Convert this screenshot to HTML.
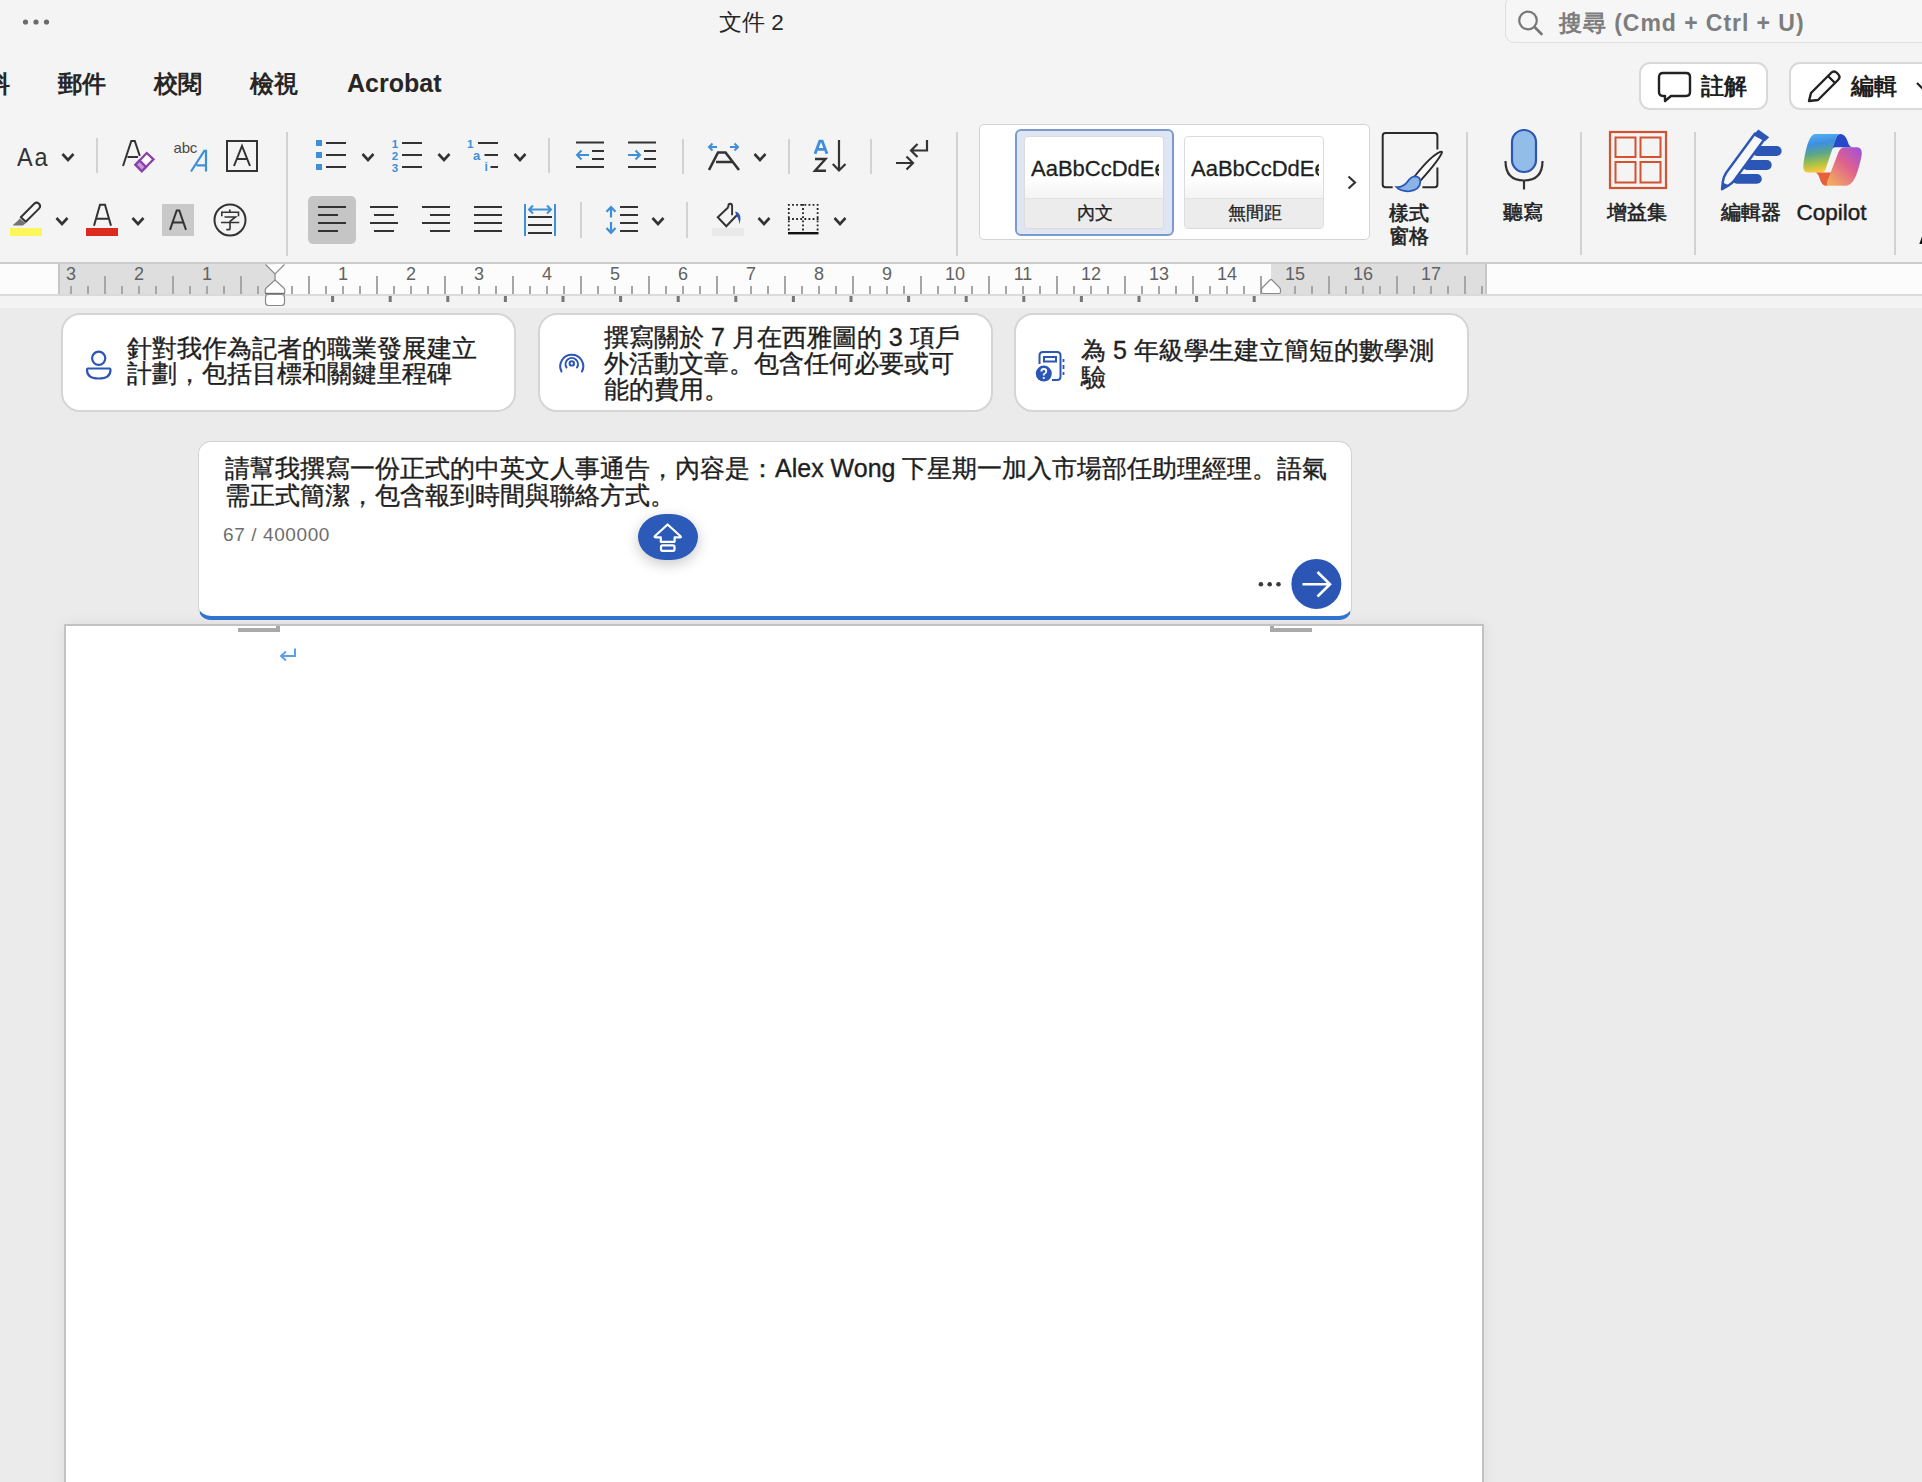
<!DOCTYPE html>
<html><head><meta charset="utf-8">
<style>
*{box-sizing:border-box;margin:0;padding:0}
html,body{width:1922px;height:1482px;overflow:hidden;background:#ebebeb;font-family:"Liberation Sans",sans-serif;color:#1f1f1f}
.a{position:absolute}
.t{position:absolute;white-space:nowrap;line-height:1}
.s{-webkit-text-stroke:0.35px #1f1f1f}
svg{position:absolute;overflow:visible}
</style></head><body>
<!-- TOOLBAR -->
<div class="a" style="left:0;top:0;width:1922px;height:262px;background:#f4f4f4"></div>
<div class="a" style="left:0;top:262px;width:1922px;height:2px;background:#cdcdcd"></div>

<!-- title row -->
<svg width="1922" height="262" style="left:0;top:0">
 <g fill="#6b6b6b"><circle cx="25.5" cy="22" r="2.6"/><circle cx="36" cy="22" r="2.6"/><circle cx="46.5" cy="22" r="2.6"/></g>
</svg>
<div class="t" style="left:719px;top:12px;font-size:22.5px;color:#262626">文件 2</div>
<!-- search -->
<div class="a" style="left:1505px;top:-4px;width:440px;height:47px;border:1.5px solid #dedede;border-radius:9px;background:#f6f6f6"></div>
<svg width="40" height="40" style="left:1510px;top:2px"><circle cx="18" cy="18.5" r="8.8" fill="none" stroke="#777" stroke-width="2.2"/><path d="M24.5 25 L31.5 32" stroke="#777" stroke-width="2.6" stroke-linecap="round"/></svg>
<div class="t" style="left:1559px;top:12px;font-size:23px;color:#7d7d7d;font-weight:bold;letter-spacing:0.95px">搜尋 (Cmd + Ctrl + U)</div>
<!-- tabs -->
<div class="t" style="left:-14px;top:71.5px;font-size:24px;font-weight:bold;color:#262626">料</div>
<div class="t" style="left:57.5px;top:71.5px;font-size:24px;font-weight:bold;color:#262626">郵件</div>
<div class="t" style="left:153.5px;top:71.5px;font-size:24px;font-weight:bold;color:#262626">校閱</div>
<div class="t" style="left:249.5px;top:71.5px;font-size:24px;font-weight:bold;color:#262626">檢視</div>
<div class="t" style="left:347px;top:71px;font-size:25px;font-weight:bold;color:#262626">Acrobat</div>
<!-- comment / edit buttons -->
<div class="a" style="left:1639px;top:62px;width:129px;height:48px;border:2px solid #d9d9d9;border-radius:11px;background:#fff"></div>
<svg width="40" height="40" style="left:1655px;top:68px"><path d="M8 5 H31 Q35 5 35 9 V24 Q35 28 31 28 H16 L10 33 V28 H8 Q4 28 4 24 V9 Q4 5 8 5 Z" fill="none" stroke="#222" stroke-width="2.4" stroke-linejoin="round"/></svg>
<div class="t" style="left:1701px;top:75px;font-size:23px;font-weight:bold;color:#1f1f1f">註解</div>
<div class="a" style="left:1789px;top:62px;width:160px;height:48px;border:2px solid #d9d9d9;border-radius:11px;background:#fff"></div>
<svg width="40" height="40" style="left:1805px;top:68px"><path d="M4 33 L6 25 L26 5 Q29 2 32 5 L33 6 Q36 9 33 12 L13 32 Z M23 8 L30 15" fill="none" stroke="#222" stroke-width="2.4" stroke-linejoin="round"/></svg>
<div class="t" style="left:1851px;top:75px;font-size:23px;font-weight:bold;color:#1f1f1f">編輯</div>
<svg width="20" height="20" style="left:1910px;top:78px"><path d="M7 5 L13 11 L19 5" fill="none" stroke="#222" stroke-width="2.2"/></svg>


<!-- RIBBON ICONS -->
<svg width="1922" height="262" style="left:0;top:0" fill="none" stroke-linecap="butt">
 <!-- separators -->
 <g stroke="#d2d2d2" stroke-width="2">
  <path d="M97 138 V173"/><path d="M549 138 V173"/><path d="M683 139 V174"/><path d="M789 139 V174"/><path d="M871 139 V174"/>
  <path d="M287 132 V256"/><path d="M957 132 V256"/>
  <path d="M581 202 V238"/><path d="M687 202 V238"/>
  <path d="M1467 132 V255"/><path d="M1581 132 V255"/><path d="M1695 132 V255"/><path d="M1895 132 V255"/>
 </g>
 <!-- chevrons -->
 <g stroke="#333" stroke-width="2.6" stroke-linejoin="miter">
  <path d="M62.5 154 L68 160 L73.5 154"/>
  <path d="M362.5 154 L368 160 L373.5 154"/>
  <path d="M438.5 154 L444 160 L449.5 154"/>
  <path d="M514.5 154 L520 160 L525.5 154"/>
  <path d="M754.5 154 L760 160 L765.5 154"/>
  <path d="M56.5 218 L62 224 L67.5 218"/>
  <path d="M132.5 218 L138 224 L143.5 218"/>
  <path d="M652.5 218 L658 224 L663.5 218"/>
  <path d="M758.5 218 L764 224 L769.5 218"/>
  <path d="M834.5 218 L840 224 L845.5 218"/>
 </g>
 <!-- Eraser A -->
 <path d="M123 166 L131.3 141 H134.8 L139.8 156 M127.5 157 H138" stroke="#333" stroke-width="2"/>
 <path d="M135.5 164.8 L146.7 153 L153.5 159.3 L141.8 171.2 Z" stroke="#8b3fae" stroke-width="2.3" fill="#fff"/>
 <path d="M135.5 164.8 L139.6 160.5 L146 166.9 L141.8 171.2 Z" fill="#c49bd6" stroke="#8b3fae" stroke-width="2.3"/>
 <!-- abc A -->
 <path d="M191 171.5 L204.3 150.8 H206 V171.5 M196.5 165.3 H206" stroke="#3f8fd8" stroke-width="2.2"/>
 <!-- box A -->
 <rect x="227" y="141" width="30" height="30" stroke="#333" stroke-width="2"/>
 <path d="M234 166 L242 146 L250 166 M237 159 H247" stroke="#333" stroke-width="2"/>
 <!-- bullets -->
 <g fill="#3f8fd8"><rect x="316" y="140" width="6" height="6"/><rect x="316" y="152" width="6" height="6"/><rect x="316" y="164" width="6" height="6"/></g>
 <g stroke="#333" stroke-width="2"><path d="M326 143 H346 M326 155 H346 M326 167 H346"/></g>
 <!-- numbering -->
 <g stroke="#333" stroke-width="2"><path d="M402 143 H422 M402 155 H422 M402 167 H422"/></g>
 <!-- multilevel -->
 <g stroke="#333" stroke-width="2"><path d="M478 143 H498 M484.5 155 H498 M490.5 167 H498"/></g>
 <!-- indent dec/inc -->
 <g stroke="#333" stroke-width="2"><path d="M576 142.5 H604 M592 151 H604 M592 159 H604 M576 167 H604"/>
 <path d="M628 142.5 H656 M644 151 H656 M644 159 H656 M628 167 H656"/></g>
 <g stroke="#3f8fd8" stroke-width="2" stroke-linejoin="miter"><path d="M577 155 H589 M581.5 150.5 L577 155 L581.5 159.5"/>
 <path d="M628 155 H640 M635.5 150.5 L640 155 L635.5 159.5"/></g>
 <!-- A arrows -->
 <path d="M709 170 L718 152.5 H725.5 L739 170 M716 162 H732" stroke="#333" stroke-width="2.6" stroke-linejoin="miter"/>
 <g stroke="#3f8fd8" stroke-width="2"><path d="M709 147 H717 M712.5 143.5 L709 147 L712.5 150.5 M730 147 H738 M734.5 143.5 L738 147 L734.5 150.5"/></g>
 <!-- AZ sort -->
 <path d="M839 140 V171 M832.8 164 L839 170.5 L845.5 164" stroke="#333" stroke-width="2.2"/>
 <path d="M815 159 H825.5 L815 170.8 H826" stroke="#333" stroke-width="2.4" stroke-linejoin="miter"/>
 <path d="M815 153.7 L819.8 141.2 H822.2 L827 153.7 M816.8 149.3 H825.2" stroke="#3f8fd8" stroke-width="2.8" stroke-linejoin="miter"/>
 <!-- combine arrows -->
 <g stroke="#333" stroke-width="2.2"><path d="M896 163 H913 M906.5 156.5 L913 163 L906.5 169.5"/><path d="M927 140 V150.5 H911 M917.5 144 L911 150.5 L917.5 157"/></g>

 <!-- ROW 2 -->
 <!-- highlighter -->
 <rect x="10" y="228" width="32" height="8" fill="#fbf75a"/>
 <path d="M19.5 218.5 L25.8 223.2 L22.8 225.6 H12.5 L18.5 220 Z" fill="#737373"/>
 <path d="M20.8 217.2 L34.2 203.8 Q36.6 201.5 39 203.8 Q41.3 206.2 39 208.6 L25.8 221.8 Z" stroke="#333" stroke-width="2" fill="#f7f7f7" stroke-linejoin="round"/>
 <!-- A red -->
 <path d="M94 225.8 L100 204.8 H105 L111 225.8 M96.5 218.7 H108.5" stroke="#333" stroke-width="2"/>
 <rect x="86" y="228" width="32" height="8" fill="#dc2b1f"/>
 <!-- gray A -->
 <rect x="162" y="204" width="32" height="32" fill="#c9c9c9"/>
 <path d="M170 229.8 L176.7 210.5 H179.3 L186 229.8 M172.8 222.5 H183.2" stroke="#333" stroke-width="2"/>
 <!-- circle zi -->
 <circle cx="230" cy="220" r="15.5" stroke="#333" stroke-width="2"/>
 <!-- align group -->
 <rect x="308" y="196" width="48" height="48" rx="5" fill="#c5c5c5"/>
 <g stroke="#333" stroke-width="2">
  <path d="M318 207 H346 M318 215 H338 M318 223 H346 M318 231 H338"/>
  <path d="M370 207 H398 M374 215 H394 M370 223 H398 M374 231 H394"/>
  <path d="M422 207 H450 M430 215 H450 M422 223 H450 M430 231 H450"/>
  <path d="M474 207 H502 M474 215 H502 M474 223 H502 M474 231 H502"/>
  <path d="M528 217 H552 M528 225 H552 M528 233 H552"/>
 </g>
 <g stroke="#3f8fd8" stroke-width="2"><path d="M525 204 V236 M555 204 V236 M529 209.5 H551 M533 205.5 L529 209.5 L533 213.5 M547 205.5 L551 209.5 L547 213.5"/></g>
 <!-- line spacing -->
 <g stroke="#333" stroke-width="2"><path d="M620 207 H638 M620 215 H638 M620 223 H638 M620 231 H638"/></g>
 <g stroke="#3f8fd8" stroke-width="2.2"><path d="M611 207.5 V217.5 M606.5 211.8 L611 207 L615.5 211.8 M611 222 V232.5 M606.5 228 L611 232.8 L615.5 228"/></g>
 <!-- bucket -->
 <rect x="712" y="228" width="32" height="8" fill="#e9e9e9"/>
 <path d="M728.3 207.5 V206.3 Q728.3 203.8 730.2 203.8 Q732.1 203.8 732.1 206.3 V215.3" stroke="#333" stroke-width="1.9"/>
 <path d="M728.3 207.3 L717.8 217.3 L726.3 226.3 L737.5 214.5" stroke="#333" stroke-width="2" fill="none" stroke-linejoin="miter"/>
 <path d="M735 211.5 Q740.5 212 740.5 219 L739.5 224.5 Q738.5 218 736.5 215.5 Z" fill="#2b56b5"/>
 <!-- borders -->
 <g stroke="#222" stroke-width="1.8" stroke-dasharray="1.8 2.3"><path d="M788 204.8 H818.5 M788.8 204 V232 M817.6 204 V232 M788 219 H818.5 M803 204 V232"/></g>
 <path d="M788 233.2 H818.5" stroke="#111" stroke-width="2.4"/>
</svg>
<div class="t" style="left:17px;top:144px;font-size:26px;color:#333;letter-spacing:2px;transform:scaleX(0.9);transform-origin:0 0">Aa</div>
<div class="t" style="left:173.5px;top:139.5px;font-size:15px;color:#4a4a4a;letter-spacing:-0.2px">abc</div>
<div class="t" style="left:391px;top:137.5px;font-size:11.5px;color:#3f8fd8;font-weight:bold;line-height:12px;width:8px;text-align:center">1<br>2<br>3</div>
<div class="t" style="left:467px;top:137.5px;font-size:11.5px;color:#3f8fd8;font-weight:bold;line-height:12px">1</div>
<div class="t" style="left:473px;top:149.5px;font-size:13px;color:#3f8fd8;font-weight:bold;line-height:12px">a</div>
<div class="t" style="left:484.5px;top:161px;font-size:12px;color:#3f8fd8;font-weight:bold;line-height:12px">i</div>
<svg width="1922" height="262" style="left:0;top:0" fill="none"><path d="M229.8 209.5 V212.3 M221.8 216.3 V212.3 H238.5 V216.3 M224.5 217 H235.5 L230 221.3 V228.8 Q230 229.6 229 229.6 H226.3 M221 222.5 H239.3" stroke="#333" stroke-width="1.6"/></svg>


<!-- STYLE GALLERY -->
<div class="a" style="left:979px;top:124px;width:391px;height:116px;background:#fff;border:1.5px solid #d4d4d4;border-radius:5px"></div>
<div class="a" style="left:1014.5px;top:128.5px;width:159.5px;height:107px;background:#dfe5f2;border:2px solid #7b9ad0;border-radius:6px"></div>
<div class="a" style="left:1024px;top:136px;width:140px;height:93px;background:linear-gradient(#fff 0,#fff 40px,#f3f3f3 62px);border:1px solid #dcdcdc;border-radius:4px;overflow:hidden">
 <div class="a" style="left:0;top:61px;width:140px;height:32px;background:#ececec;border-top:1px solid #e2e2e2"></div>
 <div class="t" style="left:6px;top:21px;font-size:22px;color:#1f1f1f;width:128px;overflow:hidden;-webkit-text-stroke:0.3px #1f1f1f">AaBbCcDdEe</div>
 <div class="t" style="left:0;top:67px;width:140px;text-align:center;font-size:18px;color:#1f1f1f;-webkit-text-stroke:0.3px #1f1f1f">內文</div>
</div>
<div class="a" style="left:1184px;top:136px;width:140px;height:93px;background:linear-gradient(#fff 0,#fff 40px,#f3f3f3 62px);border:1px solid #dcdcdc;border-radius:4px;overflow:hidden">
 <div class="a" style="left:0;top:61px;width:140px;height:32px;background:#ececec;border-top:1px solid #e2e2e2"></div>
 <div class="t" style="left:6px;top:21px;font-size:22px;color:#1f1f1f;width:128px;overflow:hidden;-webkit-text-stroke:0.3px #1f1f1f">AaBbCcDdEe</div>
 <div class="t" style="left:0;top:67px;width:140px;text-align:center;font-size:18px;color:#1f1f1f;-webkit-text-stroke:0.3px #1f1f1f">無間距</div>
</div>
<svg width="1922" height="262" style="left:0;top:0" fill="none">
 <path d="M1348.5 176.5 L1355 182.5 L1348.5 188.5" stroke="#333" stroke-width="2.2"/>
 <!-- style pane -->
 <path d="M1414 133 H1385.5 Q1382.7 133 1382.7 135.8 V184.5 Q1382.7 187.3 1385.5 187.3 H1392.7 M1422.4 187.3 H1434.6 Q1437.4 187.3 1437.4 184.5 V167.4 M1437.4 149.6 V135.8 Q1437.4 133 1434.6 133 H1414" stroke="#2a2a2a" stroke-width="2"/>
 <path d="M1441.6 153.5 Q1443 151 1440.2 151.8 Q1431 155.5 1414.5 176.5 L1419.8 181.3 Q1437 162.5 1441.6 153.5 Z" fill="#fafafa" stroke="#2a2a2a" stroke-width="1.8" stroke-linejoin="round"/>
 <path d="M1396.5 187.2 Q1404 187.3 1408 181 Q1411 176.5 1414.8 176.3 Q1420.6 176.5 1420.3 182.3 Q1419.8 189.6 1410 191.2 Q1401.5 192 1396.5 187.2 Z" fill="#8ab3e6" stroke="#2b56b5" stroke-width="1.8"/>
 <!-- mic -->
 <rect x="1512" y="130" width="24" height="42" rx="12" fill="#93bde9" stroke="#2b56b5" stroke-width="2.2"/>
 <path d="M1505.5 161 Q1505.5 180.5 1524 180.5 Q1542.5 180.5 1542.5 161 M1524 180.5 V189.5" stroke="#333" stroke-width="2.2"/>
 <!-- add-ins -->
 <rect x="1610" y="132" width="56" height="56" stroke="#d35230" stroke-width="2.2"/>
 <rect x="1615.5" y="137.5" width="20" height="19.5" stroke="#d35230" stroke-width="2"/>
 <rect x="1640.5" y="137.5" width="20" height="19.5" stroke="#d35230" stroke-width="2"/>
 <rect x="1615.5" y="162" width="20" height="20.5" stroke="#d35230" stroke-width="2"/>
 <rect x="1640.5" y="162" width="20" height="20.5" stroke="#d35230" stroke-width="2"/>
 <!-- editor pen -->
 <g stroke="#2b56b5" stroke-width="9.8" stroke-linecap="round"><path d="M1757 151 H1776.7"/><path d="M1747 165 H1766.8"/><path d="M1737 178.9 H1756.9"/></g>
 <path d="M1755 133.5 L1726 173 Q1723.5 177 1722.8 182 L1722 189.2 L1728.8 185.2 Q1732 183.3 1734.2 180.4 L1764 139.8 Z" fill="#f8f8f8" stroke="#2b56b5" stroke-width="2.4" stroke-linejoin="round"/>
 <path d="M1753.2 135.3 L1758.3 129.5 L1769.2 137.3 L1765 141.3 Z" fill="#2b56b5"/>
 <path d="M1721.5 190 L1722.6 182.5 L1729.8 185.8 Z" fill="#2b56b5"/>
 <!-- copilot -->
 <defs>
  <linearGradient id="cpA" x1="0" y1="0" x2="0.15" y2="1"><stop offset="0" stop-color="#58b6f5"/><stop offset="0.3" stop-color="#3e8fe0"/><stop offset="0.55" stop-color="#5aa68c"/><stop offset="0.78" stop-color="#a3c04a"/><stop offset="1" stop-color="#f7c93a"/></linearGradient>
  <linearGradient id="cpB" x1="1" y1="0" x2="0.2" y2="1"><stop offset="0" stop-color="#9a4fe2"/><stop offset="0.5" stop-color="#e0628c"/><stop offset="1" stop-color="#f2aa62"/></linearGradient>
 </defs>
 <path d="M1840.5 134 Q1845 134 1847.5 141 L1849 145 Q1850.5 147.3 1853 147.3 H1835 Q1832.5 147.3 1831.5 150 L1836 138 Q1837.5 134 1840.5 134 Z" fill="#2549c9"/>
 <path d="M1815.3 134 H1840.5 Q1837.5 134 1836 138 L1825.5 169.5 Q1824.5 172.5 1821 172.5 H1808.5 Q1803.3 172.5 1803.3 167 Q1803.5 160 1806 150 Q1809.5 134.5 1815.3 134 Z" fill="url(#cpA)"/>
 <path d="M1815.3 172.5 Q1818 173 1819.5 178 Q1821.5 185.7 1826 185.7 Q1829.5 185.7 1831 181 L1834 172.5 Z" fill="#e6603c"/>
 <path d="M1845 147.3 H1857 Q1862 147.3 1861.8 154 Q1861 160 1858 170 Q1854 184 1847 185.7 H1829 Q1826 185.7 1827 182 L1838.5 152 Q1840.5 147.3 1845 147.3 Z" fill="url(#cpB)"/>
 <!-- partial glyph at right edge -->
 <path d="M1919.3 244 L1922 236.5 V244 Z" fill="#111"/>
</svg>
<div class="t" style="left:1388px;top:202px;font-size:20px;color:#1f1f1f;-webkit-text-stroke:0.6px #1f1f1f;line-height:23px;width:42px;text-align:center">樣式<br>窗格</div>
<div class="t" style="left:1503px;top:202px;font-size:20px;color:#1f1f1f;-webkit-text-stroke:0.6px #1f1f1f">聽寫</div>
<div class="t" style="left:1607px;top:202px;font-size:20px;color:#1f1f1f;-webkit-text-stroke:0.6px #1f1f1f">增益集</div>
<div class="t" style="left:1721px;top:202px;font-size:20px;color:#1f1f1f;-webkit-text-stroke:0.6px #1f1f1f">編輯器</div>
<div class="t" style="left:1796.5px;top:202px;font-size:22.5px;color:#1f1f1f;-webkit-text-stroke:0.45px #1f1f1f">Copilot</div>

<!-- RULER -->
<div class="a" id="ruler" style="left:0;top:264px;width:1922px;height:30px;background:#fcfcfc"></div>
<div class="a" style="left:0;top:294px;width:1922px;height:2px;background:#dadada"></div>
<div class="a" style="left:0;top:296px;width:1922px;height:12px;background:#f3f3f3"></div>
<svg width="1922" height="50" style="left:0;top:262px" fill="none">
<rect x="58" y="2" width="217" height="30" fill="#dedede"/>
<rect x="1271" y="2" width="216" height="30" fill="#dedede"/>
<path d="M59 2 V32" stroke="#c6c6c6" stroke-width="2"/>
<path d="M1486 2 V32" stroke="#c6c6c6" stroke-width="2"/>
<path d="M71 24 V32 M88 24 V32 M105 14 V32 M122 24 V32 M139 24 V32 M156 24 V32 M173 14 V32 M190 24 V32 M207 24 V32 M224 24 V32 M241 14 V32 M258 24 V32 M292 24 V32 M309 14 V32 M326 24 V32 M343 24 V32 M360 24 V32 M377 14 V32 M394 24 V32 M411 24 V32 M428 24 V32 M445 14 V32 M462 24 V32 M479 24 V32 M496 24 V32 M513 14 V32 M530 24 V32 M547 24 V32 M564 24 V32 M581 14 V32 M598 24 V32 M615 24 V32 M632 24 V32 M649 14 V32 M666 24 V32 M683 24 V32 M700 24 V32 M717 14 V32 M734 24 V32 M751 24 V32 M768 24 V32 M785 14 V32 M802 24 V32 M819 24 V32 M836 24 V32 M853 14 V32 M870 24 V32 M887 24 V32 M904 24 V32 M921 14 V32 M938 24 V32 M955 24 V32 M972 24 V32 M989 14 V32 M1006 24 V32 M1023 24 V32 M1040 24 V32 M1057 14 V32 M1074 24 V32 M1091 24 V32 M1108 24 V32 M1125 14 V32 M1142 24 V32 M1159 24 V32 M1176 24 V32 M1193 14 V32 M1210 24 V32 M1227 24 V32 M1244 24 V32 M1261 14 V32 M1278 24 V32 M1295 24 V32 M1312 24 V32 M1329 14 V32 M1346 24 V32 M1363 24 V32 M1380 24 V32 M1397 14 V32 M1414 24 V32 M1431 24 V32 M1448 24 V32 M1465 14 V32 M1482 24 V32" stroke="#a6a6a6" stroke-width="2"/>
<path d="M332.6 34 V40 M390.2 34 V40 M447.8 34 V40 M505.4 34 V40 M563.0 34 V40 M620.6 34 V40 M678.2 34 V40 M735.8 34 V40 M793.4 34 V40 M851.0 34 V40 M908.6 34 V40 M966.2 34 V40 M1023.8 34 V40 M1081.4 34 V40 M1139.0 34 V40 M1196.6 34 V40 M1254.2 34 V40" stroke="#777" stroke-width="3"/>
<path d="M265.5 2.5 L275 12 L284.5 2.5" fill="#fff" stroke="#8a8a8a" stroke-width="1.2"/>
<path d="M275 12 V18" stroke="#a0a0a0" stroke-width="1.6"/>
<path d="M275 18 L283.8 26 Q284.8 27 284.8 28.5 V30.3 Q284.8 31.5 283.5 31.5 H266.5 Q265.2 31.5 265.2 30.3 V28.5 Q265.2 27 266.2 26 Z" fill="#fff" stroke="#8a8a8a" stroke-width="1.2"/>
<path d="M265 31.6 H285" stroke="#6f6f6f" stroke-width="1.6"/>
<rect x="265.5" y="32.5" width="19" height="11" rx="3" fill="#fff" stroke="#8a8a8a" stroke-width="1.2"/>
<path d="M1261.5 30 V28 Q1261.5 26.5 1262.5 25.5 L1270 18 Q1271 17 1272 18 L1279.5 25.5 Q1280.5 26.5 1280.5 28 V30 Q1280.5 31.5 1279 31.5 H1263 Q1261.5 31.5 1261.5 30 Z" fill="#fff" stroke="#8a8a8a" stroke-width="1.2"/>
</svg>
<div class="t" style="left:51px;top:265px;width:40px;text-align:center;font-size:18px;color:#626262">3</div>
<div class="t" style="left:119px;top:265px;width:40px;text-align:center;font-size:18px;color:#626262">2</div>
<div class="t" style="left:187px;top:265px;width:40px;text-align:center;font-size:18px;color:#626262">1</div>
<div class="t" style="left:323px;top:265px;width:40px;text-align:center;font-size:18px;color:#626262">1</div>
<div class="t" style="left:391px;top:265px;width:40px;text-align:center;font-size:18px;color:#626262">2</div>
<div class="t" style="left:459px;top:265px;width:40px;text-align:center;font-size:18px;color:#626262">3</div>
<div class="t" style="left:527px;top:265px;width:40px;text-align:center;font-size:18px;color:#626262">4</div>
<div class="t" style="left:595px;top:265px;width:40px;text-align:center;font-size:18px;color:#626262">5</div>
<div class="t" style="left:663px;top:265px;width:40px;text-align:center;font-size:18px;color:#626262">6</div>
<div class="t" style="left:731px;top:265px;width:40px;text-align:center;font-size:18px;color:#626262">7</div>
<div class="t" style="left:799px;top:265px;width:40px;text-align:center;font-size:18px;color:#626262">8</div>
<div class="t" style="left:867px;top:265px;width:40px;text-align:center;font-size:18px;color:#626262">9</div>
<div class="t" style="left:935px;top:265px;width:40px;text-align:center;font-size:18px;color:#626262">10</div>
<div class="t" style="left:1003px;top:265px;width:40px;text-align:center;font-size:18px;color:#626262">11</div>
<div class="t" style="left:1071px;top:265px;width:40px;text-align:center;font-size:18px;color:#626262">12</div>
<div class="t" style="left:1139px;top:265px;width:40px;text-align:center;font-size:18px;color:#626262">13</div>
<div class="t" style="left:1207px;top:265px;width:40px;text-align:center;font-size:18px;color:#626262">14</div>
<div class="t" style="left:1275px;top:265px;width:40px;text-align:center;font-size:18px;color:#626262">15</div>
<div class="t" style="left:1343px;top:265px;width:40px;text-align:center;font-size:18px;color:#626262">16</div>
<div class="t" style="left:1411px;top:265px;width:40px;text-align:center;font-size:18px;color:#626262">17</div>
<!-- DOC AREA -->
<div class="a" style="left:0;top:308px;width:1922px;height:1174px;background:#ebebeb"></div>

<!-- page -->
<div class="a" style="left:64px;top:624px;width:1420px;height:900px;background:#fff;border:2px solid #c2c2c2;box-shadow:0 0 12px rgba(0,0,0,0.07)"></div>
<div class="a" style="left:238px;top:628px;width:42px;height:4px;background:#a9a9a9"></div>
<div class="a" style="left:276px;top:626px;width:4px;height:6px;background:#a9a9a9"></div>
<div class="a" style="left:1270px;top:628px;width:42px;height:4px;background:#a9a9a9"></div>
<div class="a" style="left:1270px;top:626px;width:4px;height:6px;background:#a9a9a9"></div>
<svg width="20" height="20" style="left:279px;top:646.5px" fill="none"><path d="M16 1.5 V9 H2.5 M7 4.5 L2 9 L7 13.5" stroke="#5b9ff0" stroke-width="2"/></svg>

<!-- suggestion cards -->
<div class="a" style="left:61px;top:312.5px;width:455px;height:99px;background:#fff;border:2px solid #d5d5d5;border-radius:19px"></div>
<div class="a" style="left:537.5px;top:312.5px;width:455px;height:99px;background:#fff;border:2px solid #d5d5d5;border-radius:19px"></div>
<div class="a" style="left:1014px;top:312.5px;width:455px;height:99px;background:#fff;border:2px solid #d5d5d5;border-radius:19px"></div>
<svg width="1922" height="420" style="left:0;top:0" fill="none">
 <circle cx="98.7" cy="358.3" r="6.6" stroke="#2b56b5" stroke-width="2.2"/>
 <path d="M87.5 368.5 H110 Q110.5 368.5 110.5 370 Q110.5 378.5 98.7 378.5 Q87 378.5 87 370 Q87 368.5 87.5 368.5 Z" stroke="#2b56b5" stroke-width="2.2"/>
 <circle cx="571.8" cy="363.4" r="2.2" stroke="#2b56b5" stroke-width="2"/>
 <path d="M566.5 367.5 A6.2 6.2 0 1 1 577 367.5" stroke="#2b56b5" stroke-width="2" stroke-linecap="round"/>
 <path d="M561.5 371.5 A11.5 11.5 0 1 1 582 371.5" stroke="#2b56b5" stroke-width="2" stroke-linecap="round"/>
 <path d="M1039.5 364 V355.5 Q1039.5 352 1043 352 H1057 Q1060.5 352 1060.5 355.5 V376.5 Q1060.5 380 1057 380 H1052" stroke="#2b56b5" stroke-width="2"/>
 <rect x="1044" y="357" width="12" height="4.5" stroke="#2b56b5" stroke-width="2"/>
 <path d="M1063.5 359 V362 M1063.5 365 V369 M1063.5 372 V375" stroke="#2b56b5" stroke-width="1.8"/>
 <circle cx="1043.8" cy="373.6" r="8" fill="#2b56b5"/>
 <path d="M1041.3 371.5 Q1041.3 369 1043.8 369 Q1046.3 369 1046.3 371.3 Q1046.3 373 1043.8 374.3 V375.5" stroke="#fff" stroke-width="1.8"/>
 <circle cx="1043.8" cy="378" r="1.1" fill="#fff"/>
</svg>
<div class="t s" style="left:127px;top:336px;font-size:25px;line-height:25px;color:#1f1f1f">針對我作為記者的職業發展建立<br>計劃，包括目標和關鍵里程碑</div>
<div class="t s" style="left:604px;top:324px;font-size:25px;line-height:26px;color:#1f1f1f">撰寫關於 7 月在西雅圖的 3 項戶<br>外活動文章。包含任何必要或可<br>能的費用。</div>
<div class="t s" style="left:1081px;top:337px;font-size:25px;line-height:27px;color:#1f1f1f">為 5 年級學生建立簡短的數學測<br>驗</div>

<!-- chat box -->
<div class="a" style="left:198px;top:441px;width:1154px;height:179px;background:#fff;border:1.5px solid #d2d2d2;border-bottom:4.5px solid #2f74d0;border-radius:13px"></div>
<div class="t s" style="left:225px;top:455px;font-size:25px;line-height:27px;color:#1f1f1f">請幫我撰寫一份正式的中英文人事通告，內容是：Alex Wong 下星期一加入市場部任助理經理。語氣<br>需正式簡潔，包含報到時間與聯絡方式。</div>
<div class="t" style="left:223px;top:525px;font-size:19px;color:#6e6e6e;letter-spacing:0.6px">67 / 400000</div>
<svg width="1922" height="640" style="left:0;top:0" fill="none">
 <g fill="#3a3a3a"><circle cx="1260.9" cy="584.2" r="2.3"/><circle cx="1269.7" cy="584.2" r="2.3"/><circle cx="1278.5" cy="584.2" r="2.3"/></g>
 <circle cx="1316.4" cy="583.9" r="25" fill="#2b56b5"/>
 <path d="M1302.5 584.2 H1330 M1317.5 572 L1330 584.2 L1317.5 596.5" stroke="#fff" stroke-width="2.6" stroke-linejoin="miter"/>
</svg>
<div class="a" style="left:638px;top:514px;width:60px;height:46px;border-radius:27px / 23px;background:#2c5ab8;box-shadow:0 4px 14px rgba(0,0,0,0.22)"></div>
<svg width="1922" height="640" style="left:0;top:0" fill="none">
 <path d="M667.6 524.5 L655 536 Q654 537.3 655.5 537.3 H660.8 V541.8 H674.6 V537.3 H680 Q681.5 537.3 680.3 536 Z" stroke="#fff" stroke-width="2.2" stroke-linejoin="round"/>
 <rect x="661" y="545.3" width="13.5" height="5.5" rx="1.5" stroke="#fff" stroke-width="2.2"/>
</svg>


</body></html>
